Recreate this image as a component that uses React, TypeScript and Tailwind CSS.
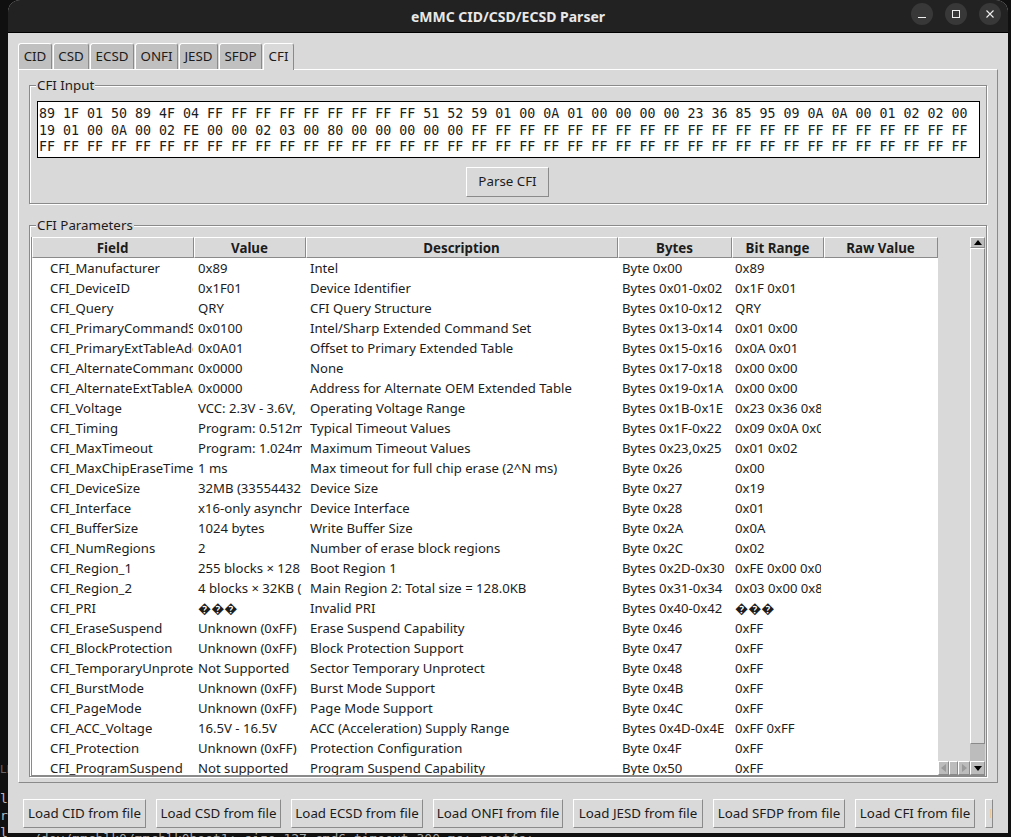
const tabs = [
  { label: "CID", w: "w-[34px]" },
  { label: "CSD", w: "w-[36px]" },
  { label: "ECSD", w: "w-[44px]" },
  { label: "ONFI", w: "w-[43px]" },
  { label: "JESD", w: "w-[39px]" },
  { label: "SFDP", w: "w-[43px]" },
]

const hexLines = [
  "89 1F 01 50 89 4F 04 FF FF FF FF FF FF FF FF FF 51 52 59 01 00 0A 01 00 00 00 00 23 36 85 95 09 0A 0A 00 01 02 02 00",
  "19 01 00 0A 00 02 FE 00 00 02 03 00 80 00 00 00 00 00 FF FF FF FF FF FF FF FF FF FF FF FF FF FF FF FF FF FF FF FF FF",
  "FF FF FF FF FF FF FF FF FF FF FF FF FF FF FF FF FF FF FF FF FF FF FF FF FF FF FF FF FF FF FF FF FF FF FF FF FF FF FF",
]

const headers = ["Field", "Value", "Description", "Bytes", "Bit Range", "Raw Value"]

const rows = [
  ["CFI_Manufacturer", "0x89", "Intel", "Byte 0x00", "0x89"],
  ["CFI_DeviceID", "0x1F01", "Device Identifier", "Bytes 0x01-0x02", "0x1F 0x01"],
  ["CFI_Query", "QRY", "CFI Query Structure", "Bytes 0x10-0x12", "QRY"],
  ["CFI_PrimaryCommandSet", "0x0100", "Intel/Sharp Extended Command Set", "Bytes 0x13-0x14", "0x01 0x00"],
  ["CFI_PrimaryExtTableAddr", "0x0A01", "Offset to Primary Extended Table", "Bytes 0x15-0x16", "0x0A 0x01"],
  ["CFI_AlternateCommandSet", "0x0000", "None", "Bytes 0x17-0x18", "0x00 0x00"],
  ["CFI_AlternateExtTableAddr", "0x0000", "Address for Alternate OEM Extended Table", "Bytes 0x19-0x1A", "0x00 0x00"],
  ["CFI_Voltage", "VCC: 2.3V - 3.6V,", "Operating Voltage Range", "Bytes 0x1B-0x1E", "0x23 0x36 0x85 0x95"],
  ["CFI_Timing", "Program: 0.512ms, Erase: 1s", "Typical Timeout Values", "Bytes 0x1F-0x22", "0x09 0x0A 0x0A 0x00"],
  ["CFI_MaxTimeout", "Program: 1.024ms, Erase: 4s", "Maximum Timeout Values", "Bytes 0x23,0x25", "0x01 0x02"],
  ["CFI_MaxChipEraseTimeout", "1 ms", "Max timeout for full chip erase (2^N ms)", "Byte 0x26", "0x00"],
  ["CFI_DeviceSize", "32MB (33554432 bytes)", "Device Size", "Byte 0x27", "0x19"],
  ["CFI_Interface", "x16-only asynchronous", "Device Interface", "Byte 0x28", "0x01"],
  ["CFI_BufferSize", "1024 bytes", "Write Buffer Size", "Byte 0x2A", "0x0A"],
  ["CFI_NumRegions", "2", "Number of erase block regions", "Byte 0x2C", "0x02"],
  ["CFI_Region_1", "255 blocks × 128", "Boot Region 1", "Bytes 0x2D-0x30", "0xFE 0x00 0x00 0x02"],
  ["CFI_Region_2", "4 blocks × 32KB (128.0KB)", "Main Region 2: Total size = 128.0KB", "Bytes 0x31-0x34", "0x03 0x00 0x80 0x00"],
  ["CFI_PRI", "\uFFFD\uFFFD\uFFFD", "Invalid PRI", "Bytes 0x40-0x42", "\uFFFD\uFFFD\uFFFD"],
  ["CFI_EraseSuspend", "Unknown (0xFF)", "Erase Suspend Capability", "Byte 0x46", "0xFF"],
  ["CFI_BlockProtection", "Unknown (0xFF)", "Block Protection Support", "Byte 0x47", "0xFF"],
  ["CFI_TemporaryUnprotect", "Not Supported", "Sector Temporary Unprotect", "Byte 0x48", "0xFF"],
  ["CFI_BurstMode", "Unknown (0xFF)", "Burst Mode Support", "Byte 0x4B", "0xFF"],
  ["CFI_PageMode", "Unknown (0xFF)", "Page Mode Support", "Byte 0x4C", "0xFF"],
  ["CFI_ACC_Voltage", "16.5V - 16.5V", "ACC (Acceleration) Supply Range", "Bytes 0x4D-0x4E", "0xFF 0xFF"],
  ["CFI_Protection", "Unknown (0xFF)", "Protection Configuration", "Byte 0x4F", "0xFF"],
  ["CFI_ProgramSuspend", "Not supported", "Program Suspend Capability", "Byte 0x50", "0xFF"],
]

const loadButtons = [
  { label: "Load CID from file", w: "w-[123px]" },
  { label: "Load CSD from file", w: "w-[125px]" },
  { label: "Load ECSD from file", w: "w-[132px]" },
  { label: "Load ONFI from file", w: "w-[130px]" },
  { label: "Load JESD from file", w: "w-[130px]" },
  { label: "Load SFDP from file", w: "w-[132px]" },
  { label: "Load CFI from file", w: "w-[120px]" },
]

const bevel = "border border-t-white border-l-white border-r-[#8a8a8a] border-b-[#8a8a8a]"

const Arrow = ({ dir, color = "#000000" }: { dir: "up" | "down" | "left" | "right"; color?: string }) => {
  const points = {
    up: "4,0 8,5 0,5",
    down: "0,0 8,0 4,5",
    left: "5,0 5,8 0,4",
    right: "0,0 5,4 0,8",
  }[dir]
  const size = dir === "up" || dir === "down" ? { width: 8, height: 5 } : { width: 5, height: 8 }
  return (
    <svg width={size.width} height={size.height} viewBox={`0 0 ${size.width} ${size.height}`}>
      <polygon points={points} fill={color} />
    </svg>
  )
}

const App = () => {
  return (
    <div className="relative w-[1011px] h-[837px] overflow-hidden bg-[#101010] font-['Noto_Sans',sans-serif] text-[13.33px] text-[#1c1c1c]">
      {/* Terminal behind the window */}
      <div className="absolute left-0 top-[763px] w-[8px] overflow-hidden font-['DejaVu_Sans_Mono',monospace] text-[11px] leading-[14px] text-[#666666]">
        LE
      </div>
      <div className="absolute left-0 top-[790px] w-[8px] overflow-hidden font-['DejaVu_Sans_Mono',monospace] text-[13px] leading-[17px] text-[#b8b8b8]">
        <div>l</div>
        <div>r</div>
        <div>l</div>
      </div>
      <div className="absolute left-[33px] top-[832px] whitespace-nowrap font-['DejaVu_Sans_Mono',monospace] text-[13px] leading-[14px] text-[#a8a8a8]">
        /dev/mmcblk0/mmcblk0boot1: size 127 cmd6 timeout 300 ms: rootfs:
      </div>

      {/* Window */}
      <div className="relative ml-2 w-[1000px] h-[833px] flex flex-col rounded-t-[12px] overflow-hidden bg-[#d9d9d9]">
        {/* Title bar */}
        <div className="relative h-[33px] shrink-0 flex items-center justify-center bg-[#222222] border-b border-black">
          <span className="font-bold text-[14px] text-[#e8e8e8]">eMMC CID/CSD/ECSD Parser</span>
          <div className="absolute right-[7px] top-[3px] flex gap-[12px]">
            <button className="w-[22px] h-[22px] rounded-full bg-[#383838] flex items-center justify-center">
              <svg width="10" height="10" viewBox="0 0 10 10">
                <path d="M1 8.5h8" stroke="#eeeeee" strokeWidth="1" />
              </svg>
            </button>
            <button className="w-[22px] h-[22px] rounded-full bg-[#383838] flex items-center justify-center">
              <svg width="10" height="10" viewBox="0 0 10 10" fill="none">
                <rect x="1.5" y="1.5" width="7" height="7" stroke="#eeeeee" strokeWidth="1" />
              </svg>
            </button>
            <button className="w-[22px] h-[22px] rounded-full bg-[#383838] flex items-center justify-center">
              <svg width="10" height="10" viewBox="0 0 10 10">
                <path d="M1.5 1.5l7 7M8.5 1.5l-7 7" stroke="#eeeeee" strokeWidth="1.1" />
              </svg>
            </button>
          </div>
        </div>

        <div className="flex-1 flex flex-col px-[10px] pt-[10px]">
          {/* Tabs */}
          <div className="flex h-[26px] gap-px">
            {tabs.map((t) => (
              <div
                key={t.label}
                className={`${t.w} h-[26px] flex items-center justify-center rounded-t-[3px] bg-[#c0c0c0] border border-b-0 border-t-white border-l-white border-r-[#8a8a8a]`}
              >
                {t.label}
              </div>
            ))}
            <div className="relative z-10 w-[31px] h-[27px] flex items-center justify-center rounded-t-[3px] bg-[#d9d9d9] border border-b-0 border-t-white border-l-white border-r-[#8a8a8a]">
              CFI
            </div>
          </div>

          {/* Pane */}
          <div className="w-[980px] h-[714px] px-[10px] pt-[15px] border border-t-white border-l-white border-r-[#8a8a8a] border-b-[#8a8a8a]">
            {/* CFI Input */}
            <div className="relative h-[119px] pl-[7px] pr-[6px] pt-[15px] border border-[#8a8a8a] shadow-[inset_1px_1px_0_#ffffff,1px_1px_0_#ffffff]">
              <span className="absolute left-[6px] -top-[10px] px-px leading-[18px] bg-[#d9d9d9]">CFI Input</span>
              <div className="h-[57px] border border-black bg-white pl-px pt-[4px] font-['DejaVu_Sans_Mono',monospace] text-[13.3px] leading-[16.5px] whitespace-pre overflow-hidden">
                {hexLines.map((l) => (
                  <div key={l}>{l}</div>
                ))}
              </div>
              <div className="flex justify-center mt-[9px] pr-[2px]">
                <button className={`w-[83px] h-[30px] ${bevel}`}>Parse CFI</button>
              </div>
            </div>

            {/* CFI Parameters */}
            <div className="relative mt-[21px] h-[552px] pl-px pt-[11px] border border-[#8a8a8a] shadow-[inset_1px_1px_0_#ffffff,1px_1px_0_#ffffff]">
              <span className="absolute left-[6px] -top-[10px] px-px leading-[18px] bg-[#d9d9d9]">CFI Parameters</span>

              <div className="flex w-[954px] h-[539px] border-l border-b border-[#8a8a8a]">
                {/* Table */}
                <div className="w-[906px] h-[538px] overflow-hidden bg-white shrink-0">
                  <div className="grid grid-cols-[162px_112px_312px_114px_92px_114px] h-[21px] bg-[#d9d9d9]">
                    {headers.map((h) => (
                      <div key={h} className={`${bevel} flex items-center justify-center pt-[2px] pr-px font-bold leading-none`}>
                        {h}
                      </div>
                    ))}
                  </div>
                  {rows.map((r) => (
                    <div key={r[0]} className="grid grid-cols-[162px_112px_312px_114px_92px_114px] h-[20px] items-center pt-px text-[13.15px]">
                      <div className="pl-[18px] pr-px">
                        <div className="overflow-hidden whitespace-nowrap">{r[0]}</div>
                      </div>
                      <div className="pl-[4px] pr-[4px]">
                        <div className="overflow-hidden whitespace-nowrap">{r[1]}</div>
                      </div>
                      <div className="pl-[4px]">
                        <div className="overflow-hidden whitespace-nowrap">{r[2]}</div>
                      </div>
                      <div className="pl-[4px]">
                        <div className="overflow-hidden whitespace-nowrap">{r[3]}</div>
                      </div>
                      <div className="pl-[3px] pr-[3px]">
                        <div className="overflow-hidden whitespace-nowrap">{r[4]}</div>
                      </div>
                      <div />
                    </div>
                  ))}
                </div>

                {/* Horizontal scrollbar sits in the corner */}
                <div className="w-[32px] h-[538px] shrink-0 flex flex-col justify-end">
                  <div className="h-[14px] flex bg-[#bcbcbc]">
                    <div className={`w-[11px] flex items-center justify-center ${bevel}`}>
                      <Arrow dir="left" color="#9a9a9a" />
                    </div>
                    <div className={`w-[9px] ${bevel}`} />
                    <div className={`w-[12px] flex items-center justify-center ${bevel}`}>
                      <Arrow dir="right" color="#9a9a9a" />
                    </div>
                  </div>
                </div>

                {/* Vertical scrollbar */}
                <div className="w-[15px] h-[538px] shrink-0 flex flex-col bg-[#bcbcbc]">
                  <div className={`h-[11px] flex items-center justify-center ${bevel}`}>
                    <Arrow dir="up" />
                  </div>
                  <div className={`h-[496px] bg-[#d9d9d9] ${bevel}`} />
                  <div className="flex-1" />
                  <div className={`h-[14px] flex items-center justify-center ${bevel}`}>
                    <Arrow dir="down" />
                  </div>
                </div>
              </div>
            </div>
          </div>

          {/* Load buttons */}
          <div className="flex gap-[10px] pl-[5px] mt-[16px]">
            {loadButtons.map((b) => (
              <button key={b.label} className={`${b.w} h-[29px] shrink-0 whitespace-nowrap ${bevel}`}>
                {b.label}
              </button>
            ))}
            <button className={`w-[8px] h-[29px] shrink-0 flex items-center justify-end pr-px ${bevel}`}>
              <span className="w-px h-[9px] bg-[#e6c9a0]" />
            </button>
          </div>
        </div>
      </div>
    </div>
  )
}

export default App
